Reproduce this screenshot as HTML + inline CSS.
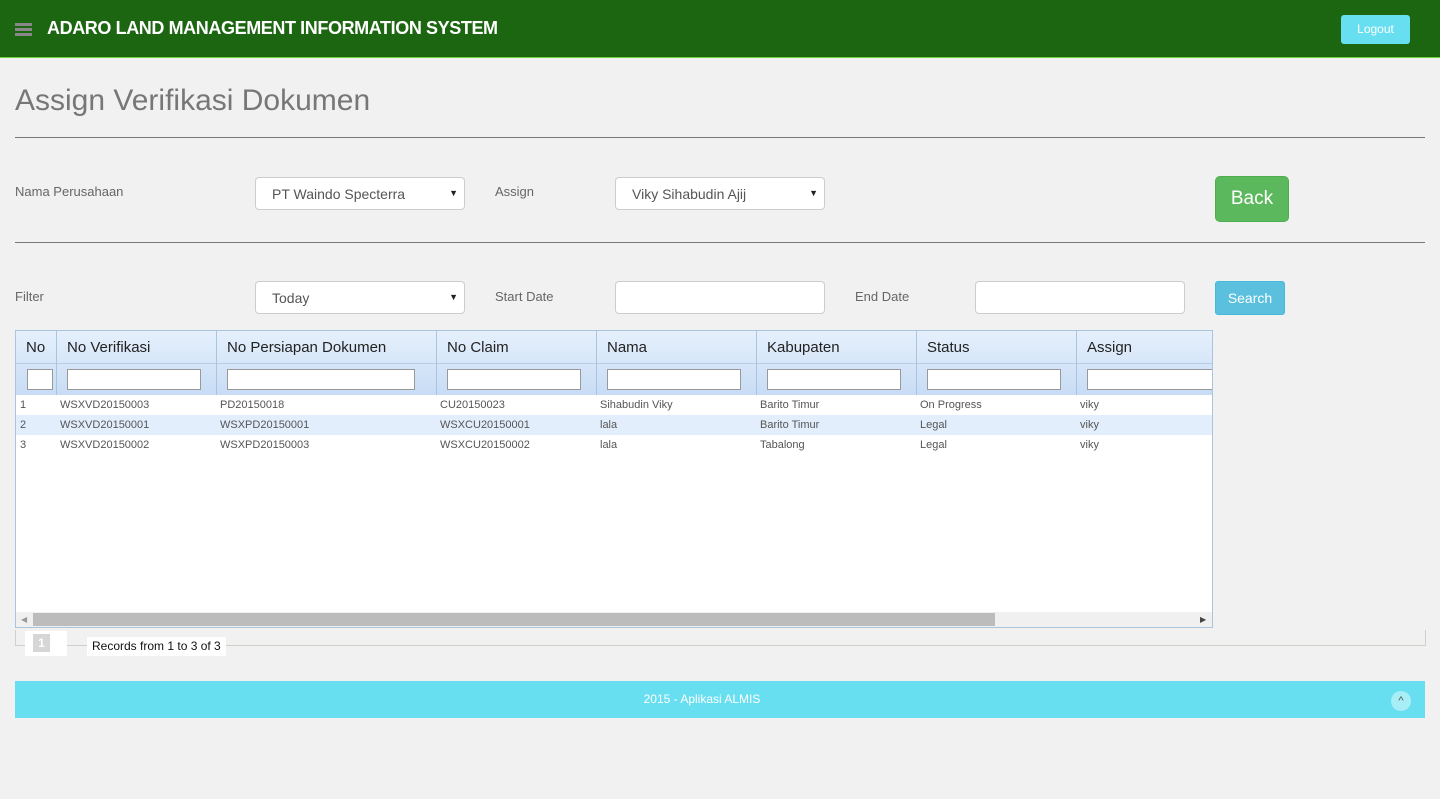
<!DOCTYPE html>
<html><head><meta charset="utf-8"><style>
*{box-sizing:border-box;margin:0;padding:0}
body{width:1440px;height:799px;background:#f1f1f1;font-family:"Liberation Sans",sans-serif;position:relative;overflow:hidden;color:#555}
.a{position:absolute}
.hdr{left:0;top:0;width:1440px;height:58px;background:#1c6612;border-bottom:1px solid #6fd33a}
.lbl{font-size:13px;color:#666}
.sel{background:#fff;border:1px solid #ccc;border-radius:4px;height:33px;font-size:14px;color:#555;padding:8px 16px}
.sel .ar{position:absolute;right:6px;top:10px;font-size:9px;color:#222}
.hr{left:15px;width:1410px;height:1px;background:#777}
.th{top:331px;height:32px;border-right:1px solid #a9c4dd;font-size:15px;color:#222;padding:8px 10px}
.fi{top:369px;height:21px;background:#fff;border:1px solid #999}
.td{font-size:11px;color:#555}
</style></head><body>
<div class="a hdr"></div>
<div class="a" style="left:15px;top:23px;width:17px;height:3px;background:#888;box-shadow:0 5px 0 #888,0 10px 0 #888"></div>
<div class="a" style="left:47px;top:18px;color:#fff;font-weight:bold;font-size:18px;letter-spacing:-0.4px">ADARO LAND MANAGEMENT INFORMATION SYSTEM</div>
<div class="a" style="left:1341px;top:15px;width:69px;height:29px;background:#67dff0;border-radius:3px;color:#fff;font-size:12px;text-align:center;line-height:29px">Logout</div>
<div class="a" style="left:15px;top:84px;font-size:30px;color:#777">Assign Verifikasi Dokumen</div>
<div class="a hr" style="top:137px"></div>
<div class="a lbl" style="left:15px;top:184px">Nama Perusahaan</div>
<div class="a sel" style="left:255px;top:177px;width:210px">PT Waindo Specterra<span class="ar">▼</span></div>
<div class="a lbl" style="left:495px;top:184px">Assign</div>
<div class="a sel" style="left:615px;top:177px;width:210px">Viky Sihabudin Ajij<span class="ar">▼</span></div>
<div class="a" style="left:1215px;top:176px;width:74px;height:46px;background:#5cb85c;border:1px solid #4cae4c;border-radius:5px;color:#fff;font-size:19px;text-align:center;line-height:44px">Back</div>
<div class="a hr" style="top:242px"></div>
<div class="a lbl" style="left:15px;top:289px">Filter</div>
<div class="a sel" style="left:255px;top:281px;width:210px">Today<span class="ar">▼</span></div>
<div class="a lbl" style="left:495px;top:289px">Start Date</div>
<div class="a sel" style="left:615px;top:281px;width:210px"></div>
<div class="a lbl" style="left:855px;top:289px">End Date</div>
<div class="a sel" style="left:975px;top:281px;width:210px"></div>
<div class="a" style="left:1215px;top:281px;width:70px;height:34px;background:#5bc0de;border:1px solid #46b8da;border-radius:3px;color:#fff;font-size:14px;text-align:center;line-height:32px">Search</div>

<div class="a" style="left:15px;top:330px;width:1198px;height:298px;background:#fff;border:1px solid #a9c4dd;overflow:hidden">
</div>
<div class="a" style="left:16px;top:331px;width:1196px;height:64px;background:linear-gradient(#e6f0fc,#c7dcf5);overflow:hidden"></div>
<div class="a th" style="left:16px;width:41px">No</div>
<div class="a th" style="left:57px;width:160px">No Verifikasi</div>
<div class="a th" style="left:217px;width:220px">No Persiapan Dokumen</div>
<div class="a th" style="left:437px;width:160px">No Claim</div>
<div class="a th" style="left:597px;width:160px">Nama</div>
<div class="a th" style="left:757px;width:160px">Kabupaten</div>
<div class="a th" style="left:917px;width:160px">Status</div>
<div class="a th" style="left:1077px;width:135px;border-right:none">Assign</div>
<div class="a" style="left:16px;top:363px;width:1196px;height:1px;background:#b5cde6"></div>
<div class="a" style="left:56px;top:363px;width:1px;height:32px;background:#a9c4dd;box-shadow:160px 0 #a9c4dd,380px 0 #a9c4dd,540px 0 #a9c4dd,700px 0 #a9c4dd,860px 0 #a9c4dd,1020px 0 #a9c4dd"></div>
<div class="a fi" style="left:27px;width:26px"></div>
<div class="a fi" style="left:67px;width:134px"></div>
<div class="a fi" style="left:227px;width:188px"></div>
<div class="a fi" style="left:447px;width:134px"></div>
<div class="a fi" style="left:607px;width:134px"></div>
<div class="a fi" style="left:767px;width:134px"></div>
<div class="a fi" style="left:927px;width:134px"></div>
<div class="a fi" style="left:1087px;width:125px;border-right:none"></div>
<div class="a" style="left:16px;top:415px;width:1196px;height:20px;background:#e2eefc"></div>
<div class="a td" style="left:20px;top:395px;line-height:20px">1<br>2<br>3</div>
<div class="a td" style="left:60px;top:395px;line-height:20px">WSXVD20150003<br>WSXVD20150001<br>WSXVD20150002</div>
<div class="a td" style="left:220px;top:395px;line-height:20px">PD20150018<br>WSXPD20150001<br>WSXPD20150003</div>
<div class="a td" style="left:440px;top:395px;line-height:20px">CU20150023<br>WSXCU20150001<br>WSXCU20150002</div>
<div class="a td" style="left:600px;top:395px;line-height:20px">Sihabudin Viky<br>lala<br>lala</div>
<div class="a td" style="left:760px;top:395px;line-height:20px">Barito Timur<br>Barito Timur<br>Tabalong</div>
<div class="a td" style="left:920px;top:395px;line-height:20px">On Progress<br>Legal<br>Legal</div>
<div class="a td" style="left:1080px;top:395px;line-height:20px">viky<br>viky<br>viky</div>
<div class="a" style="left:16px;top:612px;width:1196px;height:15px;background:#f0f0f0"></div>
<div class="a" style="left:33px;top:613px;width:962px;height:13px;background:#bcbcbc"></div>
<div class="a" style="left:21px;top:615px;font-size:8px;color:#999">◀</div>
<div class="a" style="left:1200px;top:615px;font-size:8px;color:#444">▶</div>

<div class="a" style="left:15px;top:630px;width:1411px;height:16px;border-left:1px solid #d0cfc8;border-right:1px solid #d0cfc8;border-bottom:1px solid #d0cfc8"></div>
<div class="a" style="left:25px;top:631px;width:42px;height:25px;background:#fff"></div>
<div class="a" style="left:33px;top:634px;width:17px;height:18px;background:#d6d6d6;color:#fff;font-size:12px;font-weight:bold;text-align:center;line-height:18px">1</div>
<div class="a" style="left:87px;top:637px;height:19px;padding:0 5px;background:#fff;font-size:12px;color:#111;line-height:19px">Records from 1 to 3 of 3</div>

<div class="a" style="left:15px;top:681px;width:1410px;height:37px;background:#67dff0;color:#fff;font-size:12px;text-align:center;line-height:37px;padding-right:36px">2015 - Aplikasi ALMIS</div>
<div class="a" style="left:1391px;top:691px;width:20px;height:20px;border-radius:50%;background:#a7eef7;color:#555;font-size:11px;text-align:center;line-height:20px">^</div>
</body></html>
